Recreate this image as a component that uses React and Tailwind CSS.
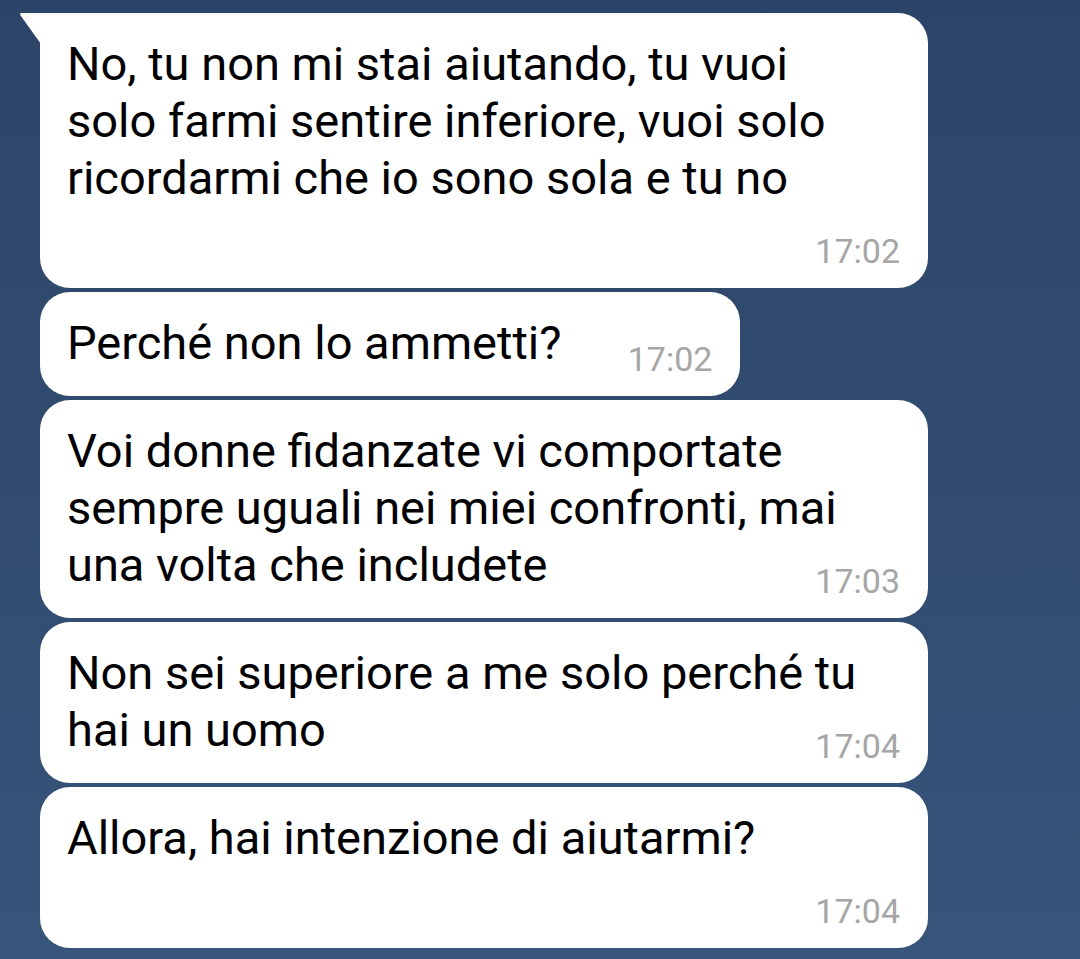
import React from "react";

const font = { fontFamily: "Roboto, 'Noto Sans', sans-serif" };

function Bubble({ lines, time, mode, tail }) {
  // mode: "own" (time on its own line), "inline" (time overlaps last line at right), "row" (narrow bubble)
  const narrow = mode === "row";
  return (
    <div
      className={`relative bg-white flex flex-col pt-[22px] pb-[20px] pl-[27px] pr-[28px] ${
        narrow ? "w-fit" : "w-[888px]"
      } ${tail ? "rounded-tl-none rounded-tr-[30px] rounded-b-[30px]" : "rounded-[30px]"}`}
    >
      {tail && (
        <svg
          className="absolute left-[-21px] top-0"
          width="22"
          height="34"
          viewBox="0 0 22 34"
        >
          <path d="M22 0 L3 0 Q0 0 1.6 2.4 L22 31 Z" fill="#ffffff" />
        </svg>
      )}
      <div
        className={`text-[47px] leading-[57px] text-black ${narrow ? "pr-[151px]" : ""}`}
      >
        {lines.map((l, i) => (
          <div key={i} className="whitespace-nowrap">
            {l}
          </div>
        ))}
      </div>
      <div
        className={`self-end text-[34px] leading-[34px] text-[#a6a6a6] ${
          mode === "own" ? "mt-[28px]" : "-mt-[29px]"
        }`}
      >
        {time}
      </div>
    </div>
  );
}

export default function App() {
  return (
    <div
      style={font}
      className="w-[1080px] h-[959px] overflow-hidden bg-gradient-to-b from-[#2c4467] to-[#37547a] pt-[13px] pl-[40px] flex flex-col items-start gap-[4px]"
    >
      <Bubble
        tail
        mode="own"
        time="17:02"
        lines={[
          "No, tu non mi stai aiutando, tu vuoi",
          "solo farmi sentire inferiore, vuoi solo",
          "ricordarmi che io sono sola e tu no",
        ]}
      />
      <Bubble mode="row" time="17:02" lines={["Perché non lo ammetti?"]} />
      <Bubble
        mode="inline"
        time="17:03"
        lines={[
          "Voi donne fidanzate vi comportate",
          "sempre uguali nei miei confronti, mai",
          "una volta che includete",
        ]}
      />
      <Bubble
        mode="inline"
        time="17:04"
        lines={["Non sei superiore a me solo perché tu", "hai un uomo"]}
      />
      <Bubble
        mode="own"
        time="17:04"
        lines={["Allora, hai intenzione di aiutarmi?"]}
      />
    </div>
  );
}
